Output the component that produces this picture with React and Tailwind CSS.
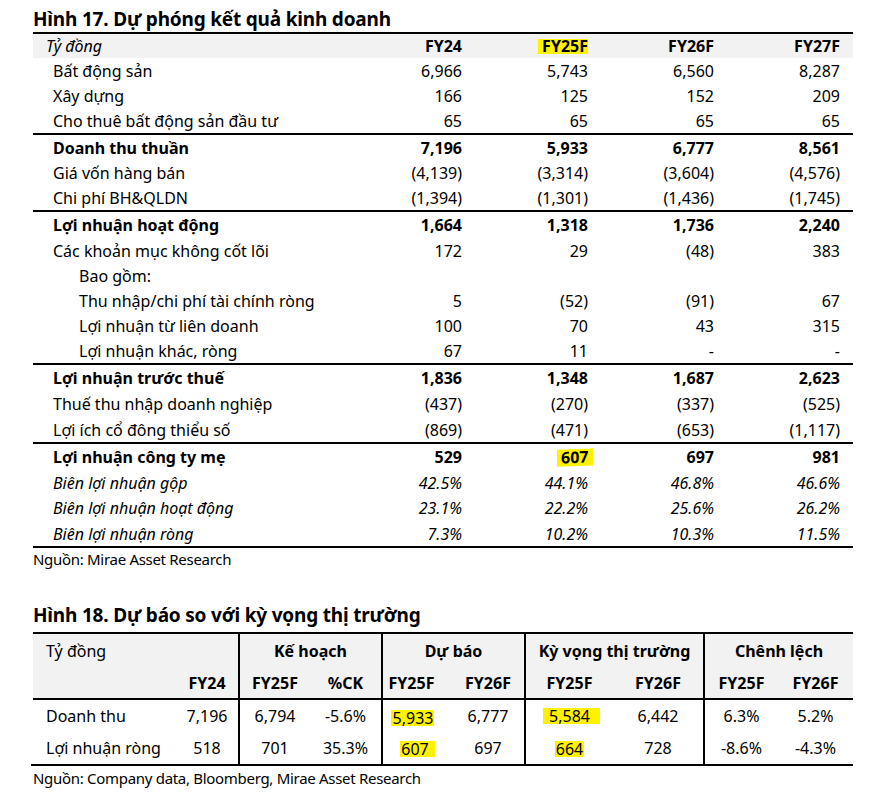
import React from 'react';

const Y = 'bg-[#fff200]';

const sections = [
  [
    { label: 'Bất động sản', v: ['6,966', '5,743', '6,560', '8,287'] },
    { label: 'Xây dựng', v: ['166', '125', '152', '209'] },
    { label: 'Cho thuê bất động sản đầu tư', v: ['65', '65', '65', '65'] },
  ],
  [
    { label: 'Doanh thu thuần', v: ['7,196', '5,933', '6,777', '8,561'], bold: true },
    { label: 'Giá vốn hàng bán', v: ['(4,139)', '(3,314)', '(3,604)', '(4,576)'] },
    { label: 'Chi phí BH&QLDN', v: ['(1,394)', '(1,301)', '(1,436)', '(1,745)'] },
  ],
  [
    { label: 'Lợi nhuận hoạt động', v: ['1,664', '1,318', '1,736', '2,240'], bold: true, h: 26 },
    { label: 'Các khoản mục không cốt lõi', v: ['172', '29', '(48)', '383'] },
    { label: 'Bao gồm:', v: ['', '', '', ''], indent: true },
    { label: 'Thu nhập/chi phí tài chính ròng', v: ['5', '(52)', '(91)', '67'], indent: true },
    { label: 'Lợi nhuận từ liên doanh', v: ['100', '70', '43', '315'], indent: true },
    { label: 'Lợi nhuận khác, ròng', v: ['67', '11', '-', '-'], indent: true },
  ],
  [
    { label: 'Lợi nhuận trước thuế', v: ['1,836', '1,348', '1,687', '2,623'], bold: true, h: 26 },
    { label: 'Thuế thu nhập doanh nghiệp', v: ['(437)', '(270)', '(337)', '(525)'], h: 26 },
    { label: 'Lợi ích cổ đông thiểu số', v: ['(869)', '(471)', '(653)', '(1,117)'] },
  ],
  [
    { label: 'Lợi nhuận công ty mẹ', v: ['529', '607', '697', '981'], bold: true, h: 26, mark: 1 },
    { label: 'Biên lợi nhuận gộp', v: ['42.5%', '44.1%', '46.8%', '46.6%'], italic: true },
    { label: 'Biên lợi nhuận hoạt động', v: ['23.1%', '22.2%', '25.6%', '26.2%'], italic: true, h: 26 },
    { label: 'Biên lợi nhuận ròng', v: ['7.3%', '10.2%', '10.3%', '11.5%'], italic: true },
  ],
];

function Row({ r }) {
  const cls = [
    'grid grid-cols-[303px_126px_126px_126px_126px] items-center',
    r.bold ? 'font-bold' : '',
    r.italic ? 'italic' : '',
    r.h === 26 ? 'h-[26px]' : 'h-[25px]',
  ].join(' ');
  return (
    <div className={cls}>
      <div className={r.indent ? 'pl-[46px]' : 'pl-[20px]'}>{r.label}</div>
      {r.v.map((x, i) => (
        <div key={i} className="text-right">
          {r.mark === i ? (
            <span className={`${Y} inline-block leading-[17px] pl-[4px] pr-[5px] -mr-[5px] -skew-y-2`}>{x}</span>
          ) : (
            x
          )}
        </div>
      ))}
    </div>
  );
}

function Table17() {
  return (
    <div>
      <div className="pt-[6px] text-[19px] leading-[26px] font-bold tracking-[-0.01em]">
        Hình 17. Dự phóng kết quả kinh doanh
      </div>
      <div className="w-[820px] border-t-2 border-black text-[16px]">
        <div className="grid grid-cols-[303px_126px_126px_126px_126px] h-[24px] items-center bg-[#f2f2f2]">
          <div className="pl-[13px] italic">Tỷ đồng</div>
          <div className="text-right font-bold">FY24</div>
          <div className="text-right font-bold">
            <span className={`${Y} inline-block leading-[15px] pl-[4px]`}>FY25F</span>
          </div>
          <div className="text-right font-bold">FY26F</div>
          <div className="text-right font-bold">FY27F</div>
        </div>
        {sections.map((sec, si) => (
          <div key={si} className={si > 0 ? 'border-t-2 border-black' : ''}>
            {sec.map((r, ri) => (
              <Row key={ri} r={r} />
            ))}
          </div>
        ))}
        <div className="border-t-2 border-black" />
      </div>
      <div className="text-[15px] leading-[22px] tracking-[-0.02em]">Nguồn: Mirae Asset Research</div>
    </div>
  );
}

const cols2 = 'grid grid-cols-[143px_62px_72px_71px_71px_72px_89px_90px_75px_75px]';

function Table18() {
  const body = [
    ['Doanh thu', '7,196', '6,794', '-5.6%', '5,933', '6,777', '5,584', '6,442', '6.3%', '5.2%'],
    ['Lợi nhuận ròng', '518', '701', '35.3%', '607', '697', '664', '728', '-8.6%', '-4.3%'],
  ];
  const hl = {
    '0-4': 'pl-[2px] pr-[1px] translate-y-[2px] -ml-[10px]',
    '1-4': 'pl-[1px] pr-[6px] translate-y-[1px] ml-[0px]',
    '0-6': 'pl-[6px] pr-[10px] ml-[4px]',
    '1-6': 'pl-[1px] pr-[1px] translate-y-[1px]',
  };
  const lineAt = (i) => (i === 2 || i === 4 || i === 6 || i === 8 ? 'border-l-2 border-black' : '');
  return (
    <div>
      <div className="mt-[32px] text-[19px] leading-[26px] font-bold tracking-[-0.01em]">
        Hình 18. Dự báo so với kỳ vọng thị trường
      </div>
      <div className="mt-[4px] w-[820px] border-t-2 border-black text-[16px]">
        <div className={`${cols2} bg-[#f2f2f2] h-[34px] items-stretch`}>
          <div className="col-span-2 pl-[13px] flex items-center">Tỷ đồng</div>
          <div className="col-span-2 border-l-2 border-black flex items-center justify-center font-bold">Kế hoạch</div>
          <div className="col-span-2 border-l-2 border-black flex items-center justify-center font-bold">Dự báo</div>
          <div className="col-span-2 border-l-2 border-black flex items-center justify-center font-bold">Kỳ vọng thị trường</div>
          <div className="col-span-2 border-l-2 border-black flex items-center justify-center font-bold">Chênh lệch</div>
        </div>
        <div className={`${cols2} bg-[#f2f2f2] h-[32px] items-stretch font-bold border-b-2 border-black`}>
          {['', 'FY24', 'FY25F', '%CK', 'FY25F', 'FY26F', 'FY25F', 'FY26F', 'FY25F', 'FY26F'].map((t, i) => (
            <div key={i} className={`flex items-center justify-center ${lineAt(i)} ${i === 4 ? 'pr-[12px]' : ''}`}>
              {t}
            </div>
          ))}
        </div>
        {body.map((r, ri) => (
          <div key={ri} className={`${cols2} h-[32px] items-stretch`}>
            {r.map((t, i) => (
              <div
                key={i}
                className={`flex items-center ${i === 0 ? 'pl-[13px]' : 'justify-center'} ${lineAt(i)}`}
              >
                {hl[`${ri}-${i}`] ? (
                  <span className={`${Y} inline-block leading-[16px] ${hl[`${ri}-${i}`]}`}>{t}</span>
                ) : (
                  t
                )}
              </div>
            ))}
          </div>
        ))}
        <div className="border-t-2 border-black -ml-[2px]" />
      </div>
      <div className="text-[15px] leading-[24px] tracking-[-0.02em]">
        Nguồn: Company data, Bloomberg, Mirae Asset Research
      </div>
    </div>
  );
}

export default function App() {
  return (
    <div className="w-[892px] h-[795px] bg-white text-black pl-[33px] font-['Noto_Sans',sans-serif]">
      <Table17 />
      <Table18 />
    </div>
  );
}
